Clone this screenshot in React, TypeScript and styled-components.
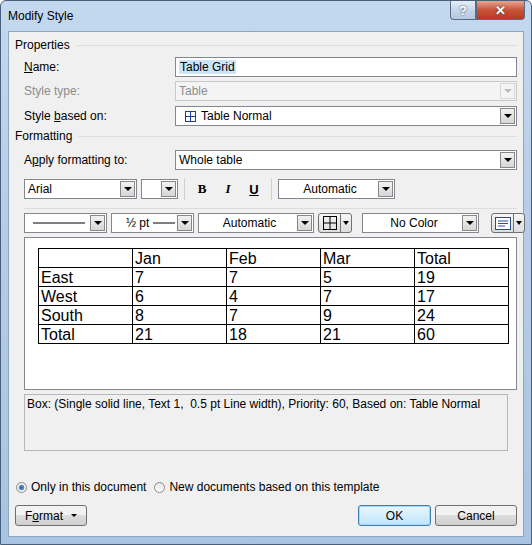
import React from "react";
import styled, { createGlobalStyle } from "styled-components";

const G = createGlobalStyle`
  html,body{margin:0;padding:0;background:#fff;}
  body{font-family:"Liberation Sans",Arial,sans-serif;font-size:12px;color:#000;}
`;
const Win = styled.div`
  width:532px;height:545px;box-sizing:border-box;
  background:linear-gradient(180deg,#c4d9ef 0%,#b5cde8 40%,#a9c3e2 100%);
  border:1px solid #4a5f7a;border-radius:6px 6px 0 0;
  display:flex;flex-direction:column;padding:0 7px 7px 7px;
`;
const TitleBar = styled.div`
  height:30px;display:flex;align-items:flex-start;justify-content:space-between;
`;
const Title = styled.div`font-family:"Liberation Sans",sans-serif;font-size:12px;padding-top:8px;color:#000;`;
const Caps = styled.div`display:flex;margin-right:-1px;`;
const CapBtn = styled.div<{ $close?: boolean }>`
  width:${p => (p.$close ? 49 : 26)}px;height:19px;box-sizing:border-box;
  border:1px solid #5a6a80;border-top:none;
  border-radius:${p => (p.$close ? "0 0 4px 0" : "0 0 0 4px")};
  background:${p => p.$close ? "linear-gradient(#e8a593,#c8533a 50%,#b83a20)" : "linear-gradient(#e6eef8,#c6d6ea 50%,#b4c8e0)"};
  color:#fff;font-weight:bold;display:flex;align-items:center;justify-content:center;font-size:13px;
  text-shadow:0 0 2px #333;
`;
const Client = styled.div`
  flex:1;background:#f0f0f0;border:1px solid #8fa6c1;display:flex;flex-direction:column;
  padding:5px 6px 0 6px;
`;
const Group = styled.div<{ $mt?: number }>`display:flex;align-items:center;gap:6px;height:16px;margin-top:${p => p.$mt ?? 0}px;
  &::after{content:"";flex:1;border-top:1px solid #d5dfe5;}`;
const Row = styled.div<{ $mt?: number }>`display:flex;align-items:center;height:20px;margin-top:${p => p.$mt ?? 5}px;padding-left:9px;`;
const Label = styled.div<{ $dis?: boolean }>`width:151px;color:${p => (p.$dis ? "#8d8d8d" : "#000")};`;
const Field = styled.div<{ $w?: number; $dis?: boolean; $center?: boolean; $flex?: boolean }>`
  ${p => (p.$flex ? "flex:1;" : `width:${p.$w}px;`)}
  height:20px;box-sizing:border-box;border:1px solid ${p => (p.$dis ? "#c9c9c9" : "#828790")};
  background:${p => (p.$dis ? "#f4f4f4" : "#fff")};color:${p => (p.$dis ? "#8d8d8d" : "#000")};
  display:flex;align-items:center;padding-left:3px;position:relative;flex-shrink:0;
  ${p => (p.$center ? "justify-content:center;" : "")}
`;
const Sel = styled.span`background:#cce4f7;color:#000;padding:0 1px;`;
const Arrow = styled.div<{ $dis?: boolean }>`
  position:absolute;right:1px;top:1px;bottom:1px;width:15px;box-sizing:border-box;
  border:1px solid ${p => (p.$dis ? "#d8d8d8" : "#888")};
  background:${p => (p.$dis ? "#f4f4f4" : "linear-gradient(#f2f2f2,#d6d6d6)")};
  display:flex;align-items:center;justify-content:center;
  &::after{content:"";border-left:4px solid transparent;border-right:4px solid transparent;border-top:4px solid ${p => (p.$dis ? "#bbb" : "#000")};}
`;
const Tool = styled.div<{ $mt?: number }>`display:flex;align-items:center;gap:4px;height:20px;margin-top:${p => p.$mt ?? 0}px;padding-left:9px;`;
const Fmt = styled.div<{ $i?: boolean; $u?: boolean }>`width:22px;text-align:center;font-family:"Liberation Serif",serif;font-weight:bold;font-size:13px;
  ${p => (p.$i ? "font-style:italic;" : "")}${p => (p.$u ? "text-decoration:underline;font-family:'Liberation Sans',sans-serif;" : "")}`;
const VSep = styled.div`width:1px;height:22px;background:#d0d0d0;margin:0 2px;`;
const HSep = styled.div`margin:9px 0 4px 9px;border-top:1px solid #dcdcdc;`;
const IconBtn = styled.div`
  width:34px;height:20px;display:flex;box-sizing:border-box;border:1px solid #707070;border-radius:3px;
  background:linear-gradient(#f6f6f6,#dcdcdc);overflow:hidden;flex-shrink:0;
`;
const IconPart = styled.div`flex:1;display:flex;align-items:center;justify-content:center;border-right:1px solid #707070;`;
const IconDrop = styled.div`width:10px;display:flex;align-items:center;justify-content:center;
  &::after{content:"";border-left:3px solid transparent;border-right:3px solid transparent;border-top:4px solid #000;}`;
const Preview = styled.div`
  margin:4px 0 0 9px;height:153px;background:#fff;border:1px solid #828790;box-sizing:border-box;
  padding:10px 0 0 13px;
`;
const T = styled.table`border-collapse:collapse;font-family:"Liberation Sans",Arial,sans-serif;font-size:16px;
  td{border:1px solid #000;width:91px;height:18px;padding:0 0 0 2px;line-height:17px;}`;
const Desc = styled.div`margin:4px 9px 0 9px;height:57px;border:1px solid #b7b7b7;box-sizing:border-box;padding:2px 2px;background:#f0f0f0;`;
const Radios = styled.div`display:flex;align-items:center;margin-top:29px;padding-left:1px;gap:8px;`;
const Radio = styled.div<{ $on?: boolean }>`
  display:flex;align-items:center;gap:4px;
  &::before{content:"";width:11px;height:11px;border-radius:50%;border:1px solid #8a8a8a;box-sizing:border-box;
  background:${p => (p.$on ? "radial-gradient(circle,#2a5ea8 0,#5d95d6 2.5px,#f4f4f4 3.2px)" : "linear-gradient(#e8e8e8,#fafafa)")};}
`;
const Footer = styled.div`display:flex;align-items:center;margin-top:11px;`;
const Btn = styled.div<{ $w: number; $def?: boolean }>`
  width:${p => p.$w}px;height:21px;box-sizing:border-box;border:1px solid ${p => (p.$def ? "#3c7fb1" : "#707070")};
  border-radius:3px;background:${p => (p.$def ? "linear-gradient(#eaf6fd,#bee6fd)" : "linear-gradient(#f2f2f2 50%,#dddddd 50%,#cfcfcf)")};
  display:flex;align-items:center;justify-content:center;gap:8px;
  ${p => (p.$def ? "box-shadow:inset 0 0 0 1px #a8d8f5;" : "")}
`;
const Caret = styled.span`border-left:3px solid transparent;border-right:3px solid transparent;border-top:3px solid #000;`;

const Drop = ({ w, children, dis, center, flex }: any) => (
  <Field $w={w} $dis={dis} $center={center} $flex={flex}>{children}<Arrow $dis={dis} /></Field>
);

export default function App() {
  const rows = [["", "Jan", "Feb", "Mar", "Total"], ["East", "7", "7", "5", "19"], ["West", "6", "4", "7", "17"], ["South", "8", "7", "9", "24"], ["Total", "21", "18", "21", "60"]];
  return (
    <Win>
      <G />
      <TitleBar>
        <Title>Modify Style</Title>
        <Caps><CapBtn>?</CapBtn><CapBtn $close>✕</CapBtn></Caps>
      </TitleBar>
      <Client>
        <Group>Properties</Group>
        <Row $mt={4}><Label><u>N</u>ame:</Label><Field $flex><Sel>Table Grid</Sel></Field></Row>
        <Row $mt={4}><Label $dis>Style type:</Label><Drop flex dis>Table</Drop></Row>
        <Row $mt={5}><Label>Style <u>b</u>ased on:</Label><Drop flex>
          <svg width="11" height="11" style={{ margin: "0 5px 0 6px" }}><rect x="0.5" y="0.5" width="10" height="10" fill="none" stroke="#1a3bb0" /><path d="M5.5 0v11M0 5.5h11" stroke="#1a3bb0" /></svg>Table Normal</Drop></Row>
        <Group $mt={2}>Formatting</Group>
        <Row $mt={6}><Label>A<u>p</u>ply formatting to:</Label><Drop flex>Whole table</Drop></Row>
        <Tool $mt={9}>
          <Drop w={113}>Arial</Drop>
          <Drop w={37}></Drop>
          <VSep /><Fmt>B</Fmt><Fmt $i>I</Fmt><Fmt $u>U</Fmt><VSep />
          <Drop w={117} center><span style={{ marginRight: 16 }}>Automatic</span></Drop>
        </Tool>
        <HSep />
        <Tool>
          <Drop w={83}><svg width="52" height="2" style={{ marginLeft: 5 }}><path d="M0 1h52" stroke="#000" /></svg></Drop>
          <Drop w={83}><span style={{ marginLeft: 11 }}>½ pt</span><svg width="22" height="2" style={{ marginLeft: 4 }}><path d="M0 1h22" stroke="#000" /></svg></Drop>
          <Drop w={116} center><span style={{ marginRight: 16 }}>Automatic</span></Drop>
          <IconBtn><IconPart><svg width="14" height="14"><rect x="0.5" y="0.5" width="13" height="13" fill="none" stroke="#000" /><path d="M7 0v14M0 7h14" stroke="#000" /></svg></IconPart><IconDrop /></IconBtn>
          <VSep style={{ margin: "0 1px" }} />
          <Drop w={117} center><span style={{ marginRight: 16 }}>No Color</span></Drop>
          <VSep style={{ margin: "0 2px" }} />
          <IconBtn><IconPart><svg width="16" height="13"><rect x="0.5" y="0.5" width="15" height="12" fill="#fff" stroke="#2a4e8a" /><path d="M3 4h10M3 6.5h10M3 9h7" stroke="#2a4e8a" /></svg></IconPart><IconDrop /></IconBtn>
        </Tool>
        <Preview>
          <T><tbody>{rows.map((r, i) => <tr key={i}>{r.map((c, j) => <td key={j}>{c}</td>)}</tr>)}</tbody></T>
        </Preview>
        <Desc>Box: (Single solid line, Text 1,&nbsp; 0.5 pt Line width), Priority: 60, Based on: Table Normal</Desc>
        <Radios>
          <Radio $on>Only in this document</Radio>
          <Radio>New documents based on this template</Radio>
        </Radios>
        <Footer>
          <Btn $w={72}><span>F<u>o</u>rmat</span><Caret /></Btn>
          <div style={{ flex: 1 }} />
          <Btn $w={73} $def>OK</Btn>
          <div style={{ width: 4 }} />
          <Btn $w={82}>Cancel</Btn>
        </Footer>
      </Client>
    </Win>
  );
}
